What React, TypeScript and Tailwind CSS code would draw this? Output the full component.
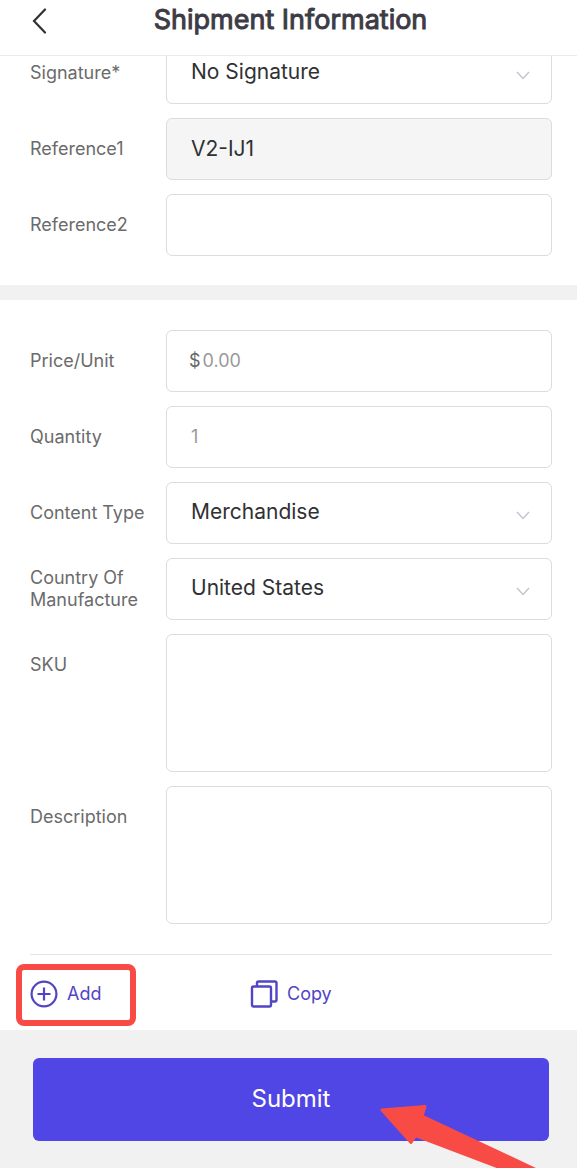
import type { FC, ReactNode } from "react";

const FIELD = "w-full rounded-md border border-[#dcdcdc] bg-white text-[#303133] outline-none";

const FieldRow: FC<{ id: string; label: string; top?: boolean; children: ReactNode }> = ({ id, label, top, children }) => (
  <div className={`flex ${top ? "items-start" : "items-center"}`}>
    <label
      htmlFor={id}
      className={`w-[136px] shrink-0 pr-4 text-[18px] leading-[22px] text-[#6b6b6b] ${top ? "pt-5" : ""}`}
    >
      {label}
    </label>
    <div className="relative min-w-0 flex-1">{children}</div>
  </div>
);

const SelectField: FC<{ id: string; options: string[] }> = ({ id, options }) => (
  <>
    <select id={id} className={`${FIELD} block h-[62px] appearance-none px-6 pb-0.5 text-[21px]`}>
      {options.map((o) => (
        <option key={o}>{o}</option>
      ))}
    </select>
    <svg
      className="pointer-events-none absolute top-7 right-[22px] h-3 w-[14px]"
      viewBox="0 0 14 12"
      fill="none"
      stroke="#c0c4cc"
      strokeWidth="1.4"
    >
      <path d="M1 2l6 6.500 6-6.500" />
    </svg>
  </>
);

const AddIcon = () => (
  <svg className="h-7 w-7" viewBox="0 0 28 28" fill="none" stroke="currentColor" strokeWidth="2.2">
    <circle cx="14" cy="14" r="12.4" />
    <path d="M14 7.5v13M7.5 14h13" />
  </svg>
);

const CopyIcon = () => (
  <svg className="h-7 w-7" viewBox="0 0 28 28" fill="none" stroke="currentColor" strokeWidth="2.4" strokeLinejoin="round">
    <rect x="2" y="6.500" width="19" height="20" rx="1.500" />
    <path d="M7 6.500V3a1.500 1.500 0 0 1 1.500-1.500h16.500A1.500 1.500 0 0 1 26.500 3v17a1.500 1.500 0 0 1-1.500 1.500H21" />
  </svg>
);

export default function App() {
  return (
    <div className="min-h-screen overflow-hidden bg-[#f1f1f1] font-['Inter',sans-serif]">
      <header className="relative z-10 flex h-14 items-start border-b border-[#ebebeb] bg-white pt-1">
        <button type="button" aria-label="Back" className="absolute top-1 left-7 p-1">
          <svg className="h-7 w-4" viewBox="0 0 16 28" fill="none" stroke="#303133" strokeWidth="2.2" strokeLinecap="round">
            <path d="M13 1.500L2 13 13 24.500" />
          </svg>
        </button>
        <h1 className="flex-1 pl-1 text-center text-[27px] leading-8 font-normal text-[#3d3b45] [-webkit-text-stroke:1px]">
          Shipment Information
        </h1>
      </header>

      <form onSubmit={(e) => e.preventDefault()}>
        {/* the first row is scrolled partly under the header */}
        <section className="-mt-3.5 flex flex-col gap-3.5 bg-white pr-[25px] pb-[29px] pl-[30px]">
          <FieldRow id="signature" label="Signature*">
            <SelectField id="signature" options={["No Signature", "Direct Signature", "Adult Signature"]} />
          </FieldRow>
          <FieldRow id="ref1" label="Reference1">
            <input
              id="ref1"
              readOnly
              value="V2-IJ1"
              className="block h-[62px] w-full rounded-md border border-[#dcdcdc] bg-[#f5f5f5] px-6 pb-0.5 text-[21px] text-[#303133] outline-none"
            />
          </FieldRow>
          <FieldRow id="ref2" label="Reference2">
            <input id="ref2" className={`${FIELD} block h-[62px] px-6 pb-0.5 text-[21px]`} />
          </FieldRow>
        </section>

        <section className="mt-[15px] bg-white pt-[30px] pr-[25px] pl-[30px]">
          <div className="flex flex-col gap-3.5 pb-[30px]">
            <FieldRow id="price" label="Price/Unit">
              <div className={`${FIELD} flex h-[62px] items-center pr-6 pb-0.5 pl-[22px] text-[18px]`}>
                <span className="pr-0.5 text-[#666]">$</span>
                <input id="price" placeholder="0.00" className="min-w-0 flex-1 outline-none placeholder:text-[#999]" />
              </div>
            </FieldRow>
            <FieldRow id="quantity" label="Quantity">
              <input
                id="quantity"
                placeholder="1"
                className={`${FIELD} block h-[62px] px-6 pb-0.5 text-[18px] placeholder:text-[#999]`}
              />
            </FieldRow>
            <FieldRow id="content" label="Content Type">
              <SelectField id="content" options={["Merchandise", "Documents", "Gift", "Sample"]} />
            </FieldRow>
            <FieldRow id="country" label="Country Of Manufacture">
              <SelectField id="country" options={["United States", "Canada", "China", "Mexico"]} />
            </FieldRow>
            <FieldRow id="sku" label="SKU" top>
              <textarea id="sku" className={`${FIELD} block h-[138px] resize-none px-6 py-4 text-[21px]`} />
            </FieldRow>
            <FieldRow id="description" label="Description" top>
              <textarea id="description" className={`${FIELD} block h-[138px] resize-none px-6 py-4 text-[21px]`} />
            </FieldRow>
          </div>

          <div className="grid h-[76px] grid-cols-[220px_1fr] items-center border-t border-[#e4e4e4] pt-0.5 text-[18px] text-[#5145c5]">
            <div className="relative flex">
              <button type="button" className="flex items-center gap-[9px]">
                <AddIcon />
                Add
              </button>
              <div className="pointer-events-none absolute -top-4 -left-3.5 h-[62px] w-[120px] rounded-lg border-[6px] border-[#f94b46]" />
            </div>
            <button type="button" className="flex items-center gap-[9px] justify-self-start">
              <CopyIcon />
              Copy
            </button>
          </div>
        </section>

        <footer className="relative overflow-hidden pt-7 pr-7 pb-[27px] pl-[33px]">
          <button type="submit" className="h-[83px] w-full rounded-md bg-[#5046e5] pb-0.5 text-2xl text-white">
            Submit
          </button>
          {/* pointer at the submit button */}
          <svg
            className="pointer-events-none absolute top-[70px] right-0 h-20 w-[200px]"
            viewBox="0 0 200 80"
            fill="#f94b46"
            stroke="#f94b46"
            strokeWidth="3"
            strokeLinejoin="round"
          >
            <path d="M5 10L48 6.500 45 16 200 89V97L38.500 35.500 34 42.500z" />
          </svg>
        </footer>
      </form>
    </div>
  );
}
